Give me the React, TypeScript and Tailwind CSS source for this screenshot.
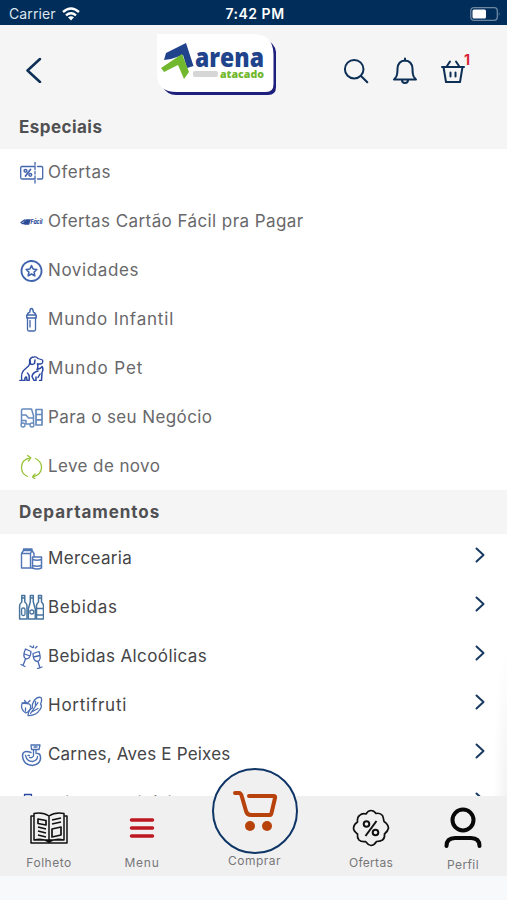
import React from 'react';

type IconProps = { className?: string; children: React.ReactNode };

const LineIcon: React.FC<IconProps> = ({ className = '', children }) => (
  <svg
    viewBox="0 0 26 26"
    fill="none"
    stroke="currentColor"
    strokeWidth="1.3"
    strokeLinecap="round"
    strokeLinejoin="round"
    className={`mb-[2px] h-[26px] w-[26px] shrink-0 ${className}`}
  >
    {children}
  </svg>
);

const TicketIcon = () => (
  <LineIcon className="text-[#4467ae]">
    <path d="M17 7.500H4Q2.700 7.500 2.700 9V18.500Q2.700 20 4 20H17M19.500 7.500H23.500Q24.700 7.500 24.700 8.500V19Q24.700 20 23.500 20H19.500" />
    <path d="M17 3.500V24.500" strokeDasharray="2.500 2" />
    <path d="M12.500 10.500L7.500 17" strokeWidth="1.800" />
    <circle cx="7.500" cy="11.800" r="1.400" strokeWidth="1.500" />
    <circle cx="12.300" cy="15.800" r="1.400" strokeWidth="1.500" />
  </LineIcon>
);

const CardIcon = () => (
  <LineIcon className="text-[#2c4b96]">
    <path d="M5.500 14L8 11.500H12.500L11 16.500H7Z" fill="currentColor" strokeWidth="0.500" />
    <path d="M3 14.500L6.500 12M4 15.500H8" />
    <text x="12.500" y="16" fontSize="6" fontWeight="800" fontStyle="italic" fill="currentColor" stroke="none" textLength="12" lengthAdjust="spacingAndGlyphs">
      Fácil
    </text>
  </LineIcon>
);

const StarIcon = () => (
  <LineIcon className="text-[#3f63ad]">
    <circle cx="13.500" cy="14" r="10" strokeWidth="1.900" strokeDasharray="2.600 0.500" />
    <path d="M13.500 8.500L15.100 12L18.800 12.500L16.100 15.100L16.800 18.900L13.500 17L10.200 18.900L10.900 15.100L8.200 12.500L11.900 12Z" strokeWidth="1.600" />
  </LineIcon>
);

const BottleIcon = () => (
  <LineIcon className="text-[#4467ae]">
    <path d="M11.800 6Q12 2.500 13.500 2.500Q15 2.500 15.300 6Q17.500 7 17.800 9H9.200Q9.500 7 11.800 6ZM8.800 9H18.200V12H8.800Z" strokeWidth="1.500" />
    <path d="M9.500 12V23.500Q9.500 25 11 25H16Q17.500 25 17.500 23.500V12M12 14.500V21" />
  </LineIcon>
);

const DogIcon = () => (
  <LineIcon className="text-[#2947a0]">
    <path d="M1.800 25.500H4Q2.500 19.500 5.500 15.500L10.500 11Q12 9 11.500 5.500Q12.500 2 16 2Q18.500 1.500 20 3.500L24.500 5Q25.500 8.500 22.500 9H19.500" />
    <path d="M12 5L12.500 9Q14.500 10 16.500 8.500L17 5M19.500 9Q20.500 12 19 14.500M20.500 14Q23 13.500 24 11.500Q25.800 14 24 17.500L23.500 25.500H21.500M20 16Q14.500 17.500 14 21.500L16 25.500H18V22M9.500 18Q12 20 11 25.500H9L8.500 22Q6.500 22 7 25.500H5M22 19L20 22.500" strokeWidth="1.500" />
  </LineIcon>
);

const TruckIcon = () => (
  <LineIcon className="text-[#668abd]">
    <path d="M3.500 20V6.500Q3.500 5 5 5H13.500L15.500 11.500V19M4 11H8L10.500 14H15M4 16.500H8V20M8.500 20H11.500" strokeWidth="1.500" />
    <circle cx="5" cy="21" r="2" />
    <circle cx="14" cy="21" r="2" />
    <path d="M18 5.500H24V21H18ZM18 10.500H24M18 15.800H24" strokeWidth="1.700" />
  </LineIcon>
);

const RecycleIcon = () => (
  <LineIcon className="text-[#9bc43e]">
    <path d="M9.500 23.500Q3.500 21 3.500 14.500Q3.500 6.500 12 4.800M17.500 5.500Q23.500 8.500 23.500 14.500Q23.500 21.500 15 23.800" />
    <path d="M9.500 2.500L12.800 4.800L10.500 8M17 21L14.500 23.800L17 26" />
  </LineIcon>
);

const GroceryIcon = () => (
  <LineIcon className="text-[#5076b5]">
    <path d="M3.500 23V8.500L5.500 5.500V4H14V5.500L16 8.500V11.500M3.500 8.500H12.500V23M5.500 5.500H14M12.500 8.500L14 5.500M3.500 23H14.500" strokeWidth="1.400" />
    <path d="M14.500 12H23.500V23Q19 25 14.500 23ZM14.500 14.500Q19 16 23.500 14.500M14.500 20.500Q19 22 23.500 20.500" strokeWidth="1.500" />
  </LineIcon>
);

const DrinksIcon = () => (
  <LineIcon className="text-[#47749e]">
    <g transform="translate(5.300 0)">
      <path d="M-1.500 1.500H1.500V8Q4 10 3.700 12.500V25H-3.700V12.500Q-4 10 -1.500 8ZM-1.500 4H1.500" strokeWidth="1.500" />
      <rect x="-1.700" y="14" width="3.400" height="7.500" rx="1.500" />
    </g>
    <g transform="translate(13.800 0)">
      <path d="M-1.500 1.500H1.500V8L3.500 15V25H-3.500V15L-1.500 8ZM-1.500 4H1.500" strokeWidth="1.500" />
      <circle cx="0" cy="18" r="2" />
    </g>
    <g transform="translate(22 0)">
      <path d="M-1.500 1.500H1.500V8Q3.700 10 3.500 12.500V25H-3.500V12.500Q-3.700 10 -1.500 8ZM-1.500 4H1.500" strokeWidth="1.500" />
      <path d="M-3 14.500H3M-3 21H3" />
    </g>
  </LineIcon>
);

const CheersIcon = () => (
  <LineIcon className="text-[#4868b1]">
    <path d="M7.500 6L13 8.500Q12.500 16 8 16Q4 14 7.500 6ZM6.500 11L12 13M7.500 16L5 22.500M3 21.500L7 23.500" />
    <path d="M21 8.500L15 10.500Q15 18 19.500 18.500Q24 17 21 8.500ZM15.500 14L22 12.500M20 18.500L22 25M19.500 25.500L24 24M12 3L14.500 4.500M15.500 3V4.500M19 3.500L17.500 5" />
  </LineIcon>
);

const VeggieIcon = () => (
  <LineIcon className="text-[#4a6eb4]">
    <path d="M9 11.500Q3.500 9 3.500 14.500Q4 19 8 21Q11 20 12.500 16.500Q13.500 11.500 9 11.500ZM9 11.500L6.500 8.500M9 11.500L12 8.500M9 11.500L4 11" />
    <path d="M10 23.500Q10.500 17.500 14.500 16Q13.500 12 17 7.500Q20 4.500 23 5.500Q24.500 8 22.500 12Q24.500 14 22 17.500Q18 24 10 23.500ZM12.500 21.500L20 10.500M14.500 19.500L20 16.500M17.500 13.500V9.500M7.500 16V19" />
  </LineIcon>
);

const MeatIcon = () => (
  <LineIcon className="text-[#4a70b3]">
    <path d="M13 11.500Q4.500 8.500 4.500 15Q5.500 24 14.500 24.500Q23 23 22.500 16Q22 12 19 12.500" strokeWidth="1.500" />
    <path d="M7.500 14.500Q9 20.500 14.500 20.500Q19.500 19.500 19.500 15.500M10 14.500H11.500M11.500 16.500Q14 17.500 15.500 15V8.500M18 12.500V8.500M13 4H22L21 8.500H13.500ZM16 6H19" />
  </LineIcon>
);

const ColdIcon = () => (
  <LineIcon className="text-[#2947a0]">
    <path d="M6.500 4.500H13.500V8L15.500 11V24H4.500V11L6.500 8Z" />
  </LineIcon>
);

const specials = [
  { label: 'Ofertas', icon: TicketIcon, tracking: 'tracking-[0.5px]' },
  { label: 'Ofertas Cartão Fácil pra Pagar', icon: CardIcon, tracking: 'tracking-[0.42px]' },
  { label: 'Novidades', icon: StarIcon, tracking: 'tracking-[0.6px]' },
  { label: 'Mundo Infantil', icon: BottleIcon, tracking: 'tracking-[0.8px]' },
  { label: 'Mundo Pet', icon: DogIcon, tracking: 'tracking-[0.9px]' },
  { label: 'Para o seu Negócio', icon: TruckIcon, tracking: 'tracking-[0.4px]' },
  { label: 'Leve de novo', icon: RecycleIcon, tracking: 'tracking-[0.4px]' },
];

const departments = [
  { label: 'Mercearia', icon: GroceryIcon, tracking: 'tracking-[0.35px]' },
  { label: 'Bebidas', icon: DrinksIcon, tracking: 'tracking-[0.75px]' },
  { label: 'Bebidas Alcoólicas', icon: CheersIcon, tracking: 'tracking-[0.4px]' },
  { label: 'Hortifruti', icon: VeggieIcon, tracking: 'tracking-[0.75px]' },
  { label: 'Carnes, Aves E Peixes', icon: MeatIcon, tracking: 'tracking-[0.2px]' },
  { label: 'Frios E Laticínios', icon: ColdIcon, tracking: 'tracking-[0.5px]' },
];

const StatusBar = () => (
  <div className="flex h-[25px] shrink-0 items-center bg-[#002d59] pt-[2px] text-[14px] text-white">
    <div className="flex flex-1 items-center gap-[6px] pl-[9px]">
      <span className="tracking-[0.1px] text-[#dce5ee]">Carrier</span>
      <svg viewBox="0 0 18 14" className="h-[14px] w-[18px]" fill="none" stroke="white" strokeWidth="2.400">
        <path d="M1 5Q9 -2 17 5M4 8.300Q9 4 14 8.300" />
        <path d="M6 10.300Q9 8 12 10.300L9 13.500Z" fill="white" stroke="none" />
      </svg>
    </div>
    <span className="font-semibold tracking-[0.5px]">7:42 PM</span>
    <div className="flex flex-1 justify-end pr-[6px]">
      <svg viewBox="0 0 31 14" className="h-[14px] w-[31px]">
        <rect x="0.800" y="0.700" width="26.500" height="12.600" rx="3" fill="none" stroke="#6d87a2" strokeWidth="1.300" />
        <rect x="2.500" y="2.500" width="13.500" height="9" rx="1.500" fill="white" />
        <path d="M28.800 4.500Q30.500 7 28.800 9.500Z" fill="#6d87a2" />
      </svg>
    </div>
  </div>
);

const Logo = () => (
  <svg viewBox="0 0 122 62" className="h-[62px] w-[122px] font-['Open_Sans',sans-serif]">
    <path d="M7 52Q12 61 21 61H113Q121 61 121 53V18Q120 9 110 5L14 52Z" fill="#1c1f7c" />
    <path d="M2 0H98Q118 0 118.500 20V50Q118.500 58 111 58H22Q2 58 2 40Z" fill="white" />
    <path d="M9 26L11 19L31 9L38.500 32L32 34L28 21L16 25Z" fill="#20438b" />
    <path d="M6 34L27 20L34 38L29 45L23 31L9 38Z" fill="#72b82f" />
    <rect x="38" y="37" width="25" height="6" rx="2" fill="#d6d6d6" />
    <text x="40" y="33" fontSize="26" fontWeight="800" fill="#20438b" textLength="69" lengthAdjust="spacingAndGlyphs">arena</text>
    <text x="65" y="43.500" fontSize="11" fontWeight="800" fill="#72b82f" textLength="44" lengthAdjust="spacingAndGlyphs">atacado</text>
  </svg>
);

const Header = () => (
  <header className="flex h-[79px] shrink-0 items-start bg-[#f5f5f5] pt-[8px] text-[#0d2e55]">
    <button className="mt-[24px] ml-[25px]">
      <svg viewBox="0 0 17 26" className="h-[26px] w-[17px]" fill="none" stroke="currentColor" strokeWidth="2.500" strokeLinecap="round" strokeLinejoin="round">
        <path d="M15 2L2.500 13.500L15 25" />
      </svg>
    </button>
    <div className="mt-px ml-[113px]">
      <Logo />
    </div>
    <svg viewBox="0 0 28 28" className="mt-[24px] ml-[65px] h-[28px] w-[28px]" fill="none" stroke="currentColor" strokeWidth="2" strokeLinecap="round">
      <circle cx="12.200" cy="12.200" r="9.300" />
      <path d="M19 19L25.300 25.300" />
    </svg>
    <svg viewBox="0 0 26 28" className="mt-[24px] ml-[22px] h-[28px] w-[26px]" fill="none" stroke="currentColor" strokeWidth="2" strokeLinecap="round" strokeLinejoin="round">
      <path d="M13 1.500V3.500M13 3.500Q6 4 5.500 11.500Q5.500 18 4 20L2 22.500H24L22 20Q20.500 18 20.500 11.500Q20 4 13 3.500ZM10 23Q10 26 13 26Q16 26 16 23" />
    </svg>
    <div className="relative mt-[24px] ml-[22px]">
      <svg viewBox="0 0 26 28" className="h-[28px] w-[26px]" fill="none" stroke="currentColor" strokeWidth="2" strokeLinecap="round" strokeLinejoin="round">
        <path d="M2 10H24M3.500 10L6 25H20L22.500 10M10 4.500L7 9M16 4.500L19 9M10.500 15.500V19.500M15.500 15.500V19.500" />
      </svg>
      <span className="absolute -top-[8px] left-[24px] text-[14px] font-bold text-[#d91f34]">1</span>
    </div>
  </header>
);

const SectionTitle = ({ children, className }: { children: string; className: string }) => (
  <h2 className={`flex shrink-0 items-center bg-[#f5f5f5] pt-[2px] pl-[19px] text-[17px] font-bold text-[#505052] ${className}`}>{children}</h2>
);

const NavLabel = ({ children, className = '' }: { children: string; className?: string }) => (
  <span className={`text-[12px] leading-[16px] text-[#77777a] ${className}`}>{children}</span>
);

const BottomNav = () => (
  <nav className="relative flex h-[80px] shrink-0 bg-[#f0f0f0]">
    <a className="flex w-[98px] flex-col items-center pt-[16px]">
      <svg viewBox="0 0 38 32" className="h-[32px] w-[38px]" fill="none" stroke="#111" strokeWidth="1.500" strokeLinejoin="round">
        <path d="M4 4H1V31H37V4H34M4 4V28H34V4M4 1.500Q13 0 19 4Q25 0 34 1.500V28Q25 26 19 30Q13 26 4 28ZM19 4V30" />
        <path d="M8 7L16 8.500V13L8 11.500ZM8 15L16 17M8 19L16 21M8 23L16 25M22 8L31 6M22 12L31 10M22 17L31 15V23L22 25Z" strokeWidth="1.700" />
      </svg>
      <NavLabel className="mt-[11px] tracking-[0.5px]">Folheto</NavLabel>
    </a>
    <a className="flex w-[88px] flex-col items-center pt-[22px]">
      <svg viewBox="0 0 26 20" className="h-[20px] w-[26px]" stroke="#bd1722" strokeWidth="3.500" strokeLinecap="round">
        <path d="M2.500 2H23.500M2.500 10H23.500M2.500 18H23.500" />
      </svg>
      <NavLabel className="mt-[17px] tracking-[0.8px]">Menu</NavLabel>
    </a>
    <a className="flex w-[137px] flex-col items-center">
      <span className="-mt-[28px] flex h-[86px] w-[86px] shrink-0 items-center justify-center rounded-full border-2 border-[#0e3566] bg-[#f0f0f0]">
        <svg viewBox="0 0 46 42" className="h-[42px] w-[46px]" fill="none" stroke="#b8420b" strokeWidth="4" strokeLinecap="round" strokeLinejoin="round">
          <path d="M3 3H7Q9 3 10 7L14 21Q15 25 19 25H38Q39 25 39.500 23L43 8Q43.500 6 42 6H17" />
          <circle cx="18" cy="36" r="5" fill="#b8420b" stroke="none" />
          <circle cx="35" cy="36" r="5" fill="#b8420b" stroke="none" />
        </svg>
      </span>
      <NavLabel className="-mt-px tracking-[0.5px]">Comprar</NavLabel>
    </a>
    <a className="flex w-[96px] flex-col items-center pt-[13px]">
      <svg viewBox="0 0 38 38" className="h-[38px] w-[38px]" fill="none" stroke="#111" strokeWidth="1.700" strokeLinejoin="round">
        <path d="M19 1.500Q22 1.500 24 4.500Q28 3.500 30.500 6.500Q31.500 9 32 12.500Q36 15 36.500 19Q36 22 32.500 25Q33 29 30.500 31Q28 32.500 24.500 32.500Q22 36.500 19 36.500Q16 36 13.500 32.500Q9 33 7 31Q5 28.500 5.500 25Q1.500 22 1.500 19Q2 15 5.500 13Q5 8.500 7.500 6.500Q10 4 14 5Q16 1.500 19 1.500Z" />
        <path d="M24.500 12L13.500 27" strokeWidth="2" />
        <circle cx="14.500" cy="15" r="2.800" strokeWidth="2" />
        <circle cx="23.500" cy="23.500" r="2.800" strokeWidth="2" />
      </svg>
      <NavLabel className="mt-[8px] tracking-[0.3px]">Ofertas</NavLabel>
    </a>
    <a className="flex w-[88px] flex-col items-center pt-[11px]">
      <svg viewBox="0 0 38 42" className="h-[42px] w-[38px]" fill="none" stroke="#080808" strokeWidth="4" strokeLinecap="round">
        <circle cx="19" cy="13" r="10.500" />
        <path d="M2.500 39Q2.500 31 11 31H27Q35.500 31 35.500 39" />
      </svg>
      <NavLabel className="mt-[8px] tracking-[0.4px]">Perfil</NavLabel>
    </a>
  </nav>
);

export default function App() {
  return (
    <div className="flex h-[900px] w-[507px] flex-col overflow-hidden bg-white font-['Inter',sans-serif]">
      <StatusBar />
      <Header />
      <main className="relative min-h-0 flex-1 overflow-hidden">
        <SectionTitle className="h-[45px] tracking-[0.45px]">Especiais</SectionTitle>
        <ul className="-my-px">
          {specials.map(({ label, icon: Icon, tracking }) => (
            <li key={label} className="flex h-[49px] items-center gap-[4px] pl-[18px] text-[17px] text-[#68686a]">
              <Icon />
              <span className={tracking}>{label}</span>
            </li>
          ))}
        </ul>
        <SectionTitle className="h-[44px] tracking-[0.95px]">Departamentos</SectionTitle>
        <ul>
          {departments.map(({ label, icon: Icon, tracking }) => (
            <li key={label} className="flex h-[49px] items-center gap-[4px] pr-[22px] pl-[18px] text-[17px] text-[#454547]">
              <Icon />
              <span className={`flex-1 ${tracking}`}>{label}</span>
              <svg viewBox="0 0 10 16" className="mb-[7px] h-[16px] w-[10px]" fill="none" stroke="#183960" strokeWidth="2" strokeLinecap="round" strokeLinejoin="round">
                <path d="M1.500 1.500L8.500 8L1.500 14.500" />
              </svg>
            </li>
          ))}
        </ul>
        {/* soft shade on the scroll edge */}
        <div className="absolute right-0 bottom-0 h-[150px] w-[14px] bg-[radial-gradient(ellipse_at_bottom_right,#f3f3f3,#ffffff00_70%)]" />
      </main>
      <BottomNav />
      <div className="h-[24px] shrink-0 bg-[#f7f9fb]" />
    </div>
  );
}
